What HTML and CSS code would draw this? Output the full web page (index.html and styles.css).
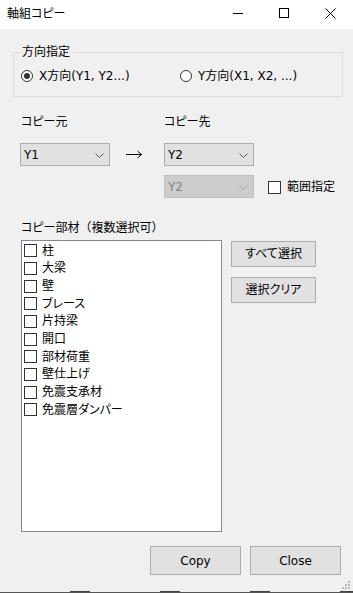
FILE: index.html
```
<!DOCTYPE html>
<html lang="ja">
<head>
<meta charset="utf-8">
<title>軸組コピー</title>
<link rel="stylesheet" href="styles.css">
</head>
<body>
<div class="window">
  <div class="titlebar">
    <div class="title">軸組コピー</div>
    <div class="caption">
      <div class="cap-btn"><svg width="10" height="10" viewBox="0 0 10 10"><line x1="0" y1="5.5" x2="10" y2="5.5" stroke="#000" stroke-width="1"/></svg></div>
      <div class="cap-btn"><svg width="10" height="10" viewBox="0 0 10 10"><rect x="0.5" y="0.5" width="9" height="9" fill="none" stroke="#000" stroke-width="1"/></svg></div>
      <div class="cap-btn"><svg width="11" height="11" viewBox="0 0 11 11"><path d="M0.5 0.5 L10.5 10.5 M10.5 0.5 L0.5 10.5" stroke="#000" stroke-width="1"/></svg></div>
    </div>
  </div>

  <div class="content">
    <div class="group">
      <div class="legend">方向指定</div>
      <div class="radio-row">
        <label class="radio-opt first"><span class="radio checked"></span><span>X方向(Y1, Y2...)</span></label>
        <label class="radio-opt"><span class="radio"></span><span>Y方向(X1, X2, ...)</span></label>
      </div>
    </div>

    <div class="label-row">
      <div class="lbl src">コピー元</div>
      <div class="lbl">コピー先</div>
    </div>

    <div class="combo-row">
      <div class="combo"><span>Y1</span><svg class="chev" width="9" height="5" viewBox="0 0 9 5"><path d="M0.5 0.5 L4.5 4.5 L8.5 0.5" fill="none" stroke="#606060" stroke-width="1"/></svg></div>
      <div class="arrow"><svg width="17" height="9" viewBox="0 0 17 9"><path d="M0 4.5 H15.5 M11.5 1 L15.5 4.5 L11.5 8" fill="none" stroke="#000" stroke-width="1"/></svg></div>
      <div class="combo"><span>Y2</span><svg class="chev" width="9" height="5" viewBox="0 0 9 5"><path d="M0.5 0.5 L4.5 4.5 L8.5 0.5" fill="none" stroke="#606060" stroke-width="1"/></svg></div>
    </div>

    <div class="range-row">
      <div class="combo disabled"><span>Y2</span><svg class="chev" width="9" height="5" viewBox="0 0 9 5"><path d="M0.5 0.5 L4.5 4.5 L8.5 0.5" fill="none" stroke="#a0a0a0" stroke-width="1"/></svg></div>
      <label class="check-opt"><span class="check"></span><span>範囲指定</span></label>
    </div>

    <div class="parts-label">コピー部材<span class="fw">（複数選択可）</span></div>

    <div class="parts">
      <div class="listbox">
        <div class="item"><span class="check"></span><span>柱</span></div>
        <div class="item"><span class="check"></span><span>大梁</span></div>
        <div class="item"><span class="check"></span><span>壁</span></div>
        <div class="item"><span class="check"></span><span>ブレース</span></div>
        <div class="item"><span class="check"></span><span>片持梁</span></div>
        <div class="item"><span class="check"></span><span>開口</span></div>
        <div class="item"><span class="check"></span><span>部材荷重</span></div>
        <div class="item"><span class="check"></span><span>壁仕上げ</span></div>
        <div class="item"><span class="check"></span><span>免震支承材</span></div>
        <div class="item"><span class="check"></span><span>免震層ダンパー</span></div>
      </div>
      <div class="side-buttons">
        <div class="btn side">すべて選択</div>
        <div class="btn side">選択クリア</div>
      </div>
    </div>

    <div class="footer">
      <div class="btn big">Copy</div>
      <div class="btn big">Close</div>
    </div>
  </div>

  <div class="bottom-edge"></div>
  <svg class="grip" width="9" height="9" viewBox="0 0 9 9">
    <rect x="6" y="0" width="2" height="2" fill="#b8b8b8"/>
    <rect x="3" y="3" width="2" height="2" fill="#b8b8b8"/>
    <rect x="6" y="3" width="2" height="2" fill="#b8b8b8"/>
    <rect x="0" y="6" width="2" height="2" fill="#b8b8b8"/>
    <rect x="3" y="6" width="2" height="2" fill="#b8b8b8"/>
    <rect x="6" y="6" width="2" height="2" fill="#b8b8b8"/>
  </svg>
</div>
</body>
</html>
```
FILE: styles.css
```
* { box-sizing: border-box; }
html, body { margin: 0; padding: 0; }
body {
  font-family: "DejaVu Sans", "Noto Sans CJK JP", sans-serif;
  font-size: 12px;
  line-height: 16px;
  color: #000;
  font-feature-settings: "palt";
  background: #f0f0f0;
}
.window {
  position: relative;
  width: 353px;
  height: 593px;
  background: #f0f0f0;
  display: flex;
  flex-direction: column;
  overflow: hidden;
}
.titlebar {
  height: 29px;
  background: #fff;
  display: flex;
  align-items: center;
  justify-content: space-between;
}
.title { margin-left: 7px; margin-top: -2px; }
.caption { display: flex; height: 29px; margin-top: -3px; }
.cap-btn {
  width: 46px;
  height: 29px;
  display: flex;
  align-items: center;
  justify-content: center;
}
.cap-btn svg { display: block; }

.content { flex: 1; display: flex; flex-direction: column; }

.group {
  position: relative;
  margin: 23px 10px 0 13px;
  height: 45px;
  border: 1px solid #dcdcdc;
  padding: 3px 0 0 7px;
  display: flex;
  align-items: center;
}
.legend {
  position: absolute;
  top: -9px;
  left: 5px;
  padding: 0 3px;
  background: #f0f0f0;
}
.radio-row { display: flex; align-items: center; }
.radio-opt { display: flex; align-items: center; gap: 6px; }
.radio-opt.first { width: 159px; }
.radio {
  width: 12px;
  height: 12px;
  border: 1px solid #333;
  border-radius: 50%;
  background: #fff;
  display: flex;
  align-items: center;
  justify-content: center;
}
.radio.checked::after {
  content: "";
  width: 6px;
  height: 6px;
  border-radius: 50%;
  background: #333;
}

.label-row { display: flex; margin: 17px 0 0 21px; }
.lbl.src { width: 143px; }

.combo-row {
  display: flex;
  align-items: center;
  margin: 13px 0 0 20px;
}
.combo {
  width: 90px;
  height: 23px;
  border: 1px solid #adadad;
  background: #e1e1e1;
  display: flex;
  align-items: center;
  justify-content: space-between;
  padding: 0 5px 0 3px;
}
.combo .chev { display: block; margin-top: 1px; }
.combo.disabled { background: #cccccc; border-color: #bfbfbf; color: #838383; }
.arrow { width: 54px; padding-left: 16px; display: flex; align-items: center; }
.arrow svg { display: block; }

.range-row {
  display: flex;
  align-items: center;
  margin: 9px 0 0 164px;
}
.check-opt { display: flex; align-items: center; gap: 6px; margin-left: 14px; margin-top: 1px; }
.check {
  width: 13px;
  height: 13px;
  border: 1px solid #333;
  background: #fff;
  flex: none;
}

.parts-label { margin: 22px 0 0 21px; }
.fw { font-feature-settings: normal; }

.parts { display: flex; margin: 4px 0 0 21px; }
.listbox {
  width: 201px;
  height: 292px;
  border: 1px solid #828790;
  background: #fff;
  padding: 1px 0 0 2px;
}
.item {
  height: 17.67px;
  display: flex;
  align-items: center;
  gap: 5px;
}
.side-buttons {
  display: flex;
  flex-direction: column;
  gap: 10px;
  margin: 1px 0 0 9px;
}
.btn {
  border: 1px solid #adadad;
  background: #e1e1e1;
  display: flex;
  align-items: center;
  justify-content: center;
}
.btn.side { width: 85px; height: 26px; }
.footer {
  display: flex;
  justify-content: flex-end;
  gap: 9px;
  margin: 14px 12px 0 0;
}
.btn.big { width: 91px; height: 29px; }

.bottom-edge {
  position: absolute;
  left: 0;
  right: 0;
  bottom: 0;
  height: 3px;
  background:
    linear-gradient(#555, #555) 0 2px / 100% 1px no-repeat,
    repeating-linear-gradient(90deg, transparent 0 70px, #444 70px 90px, transparent 90px 82px) 0 1px / 100% 1px no-repeat;
}
.grip { position: absolute; right: 2px; bottom: 3px; display: block; }
```
